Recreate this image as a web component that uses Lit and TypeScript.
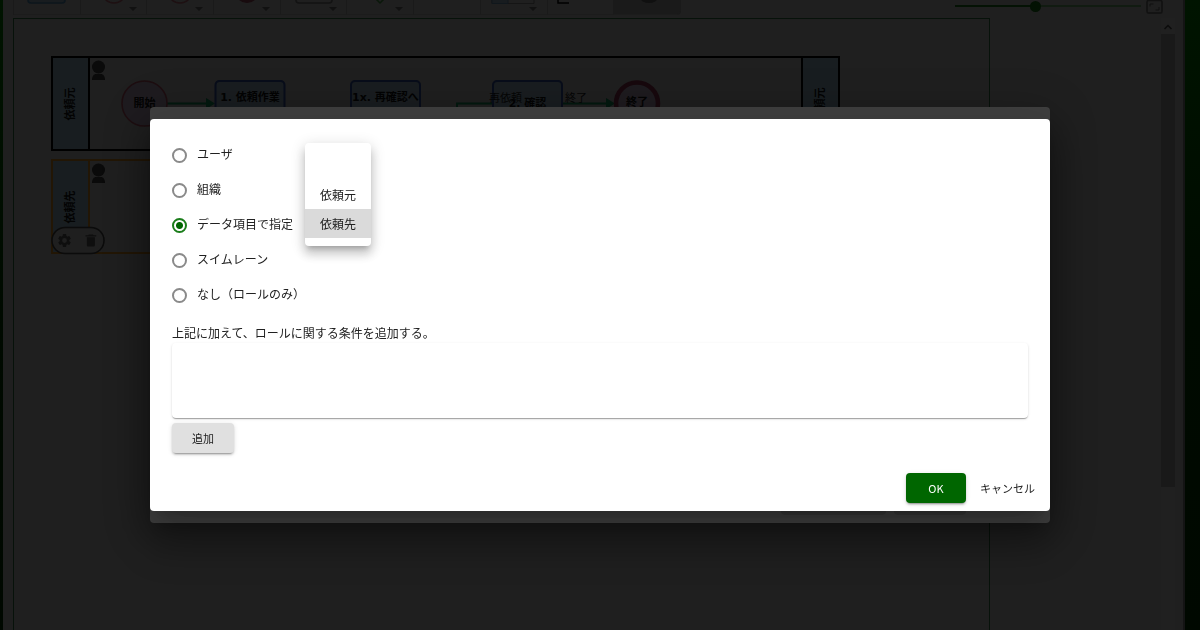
import { LitElement, html, svg, css } from "lit";
import { customElement, property, state } from "lit/decorators.js";
import { classMap } from "lit/directives/class-map.js";

@customElement("flow-toolbar")
export class FlowToolbar extends LitElement {
  static styles = css`
    :host {
      display: flex;
      justify-content: space-between;
      align-items: flex-end;
      height: 15px;
      overflow: hidden;
    }
    .tools {
      display: grid;
      grid-template-columns: repeat(10, 1fr);
      width: 667px;
      height: 15px;
      border-left: 1px solid #1a1a1a;
    }
    .tool {
      display: block;
      min-width: 0;
      padding: 0;
      border: 0;
      border-right: 1px solid #1a1a1a;
      border-bottom: 1px solid #1c1c1c;
      background: none;
    }
    .tool.active {
      background: #1a1a1a;
      border-bottom-right-radius: 4px;
    }
    .tool svg {
      display: block;
      width: 66px;
      height: 14px;
    }
    .view {
      display: flex;
      align-items: center;
      gap: 5px;
      height: 15px;
    }
    .zoom {
      appearance: none;
      width: 186px;
      height: 12px;
      margin: 0 0 3px;
      background: linear-gradient(#041204, #041204) left / 43% 2px no-repeat,
        linear-gradient(#111b11, #111b11) center / 100% 2px no-repeat;
    }
    .zoom::-webkit-slider-thumb {
      appearance: none;
      width: 11px;
      height: 11px;
      border-radius: 50%;
      background: #031203;
    }
    .full {
      width: 17px;
      height: 15px;
      padding: 0;
      border: 0;
      background: none;
    }
    .full svg {
      display: block;
    }
  `;

  private icons = [
    svg`<path d="M14 -4V0a3 3 0 0 0 3 3h31a3 3 0 0 0 3-3v-4" fill="#181c1f" stroke="#0c161d" stroke-width="1.500"/>`,
    svg`<circle cx="33" cy="-9" r="12" fill="none" stroke="#1e1012" stroke-width="1.500"/>`,
    svg`<circle cx="33" cy="-9" r="12" fill="none" stroke="#1e1012" stroke-width="1.500"/>`,
    svg`<circle cx="33" cy="-9" r="12" fill="#180b0e"/>`,
    svg`<path d="M15 -4V0a3 3 0 0 0 3 3h30a3 3 0 0 0 3-3v-4" fill="none" stroke="#131313" stroke-width="1.500"/>`,
    svg`<path d="M29 -1l4 4 4-4" fill="none" stroke="#0a180a" stroke-width="1.500"/>`,
    svg``,
    svg`<path d="M11 -4V3.500H53V-4" fill="none" stroke="#151515"/><path d="M11 -4V3.500H27V-4" fill="#181c1f" stroke="#10171c"/>`,
    svg`<path d="M10 -4V3H21" fill="none" stroke="#000" stroke-width="1.500"/>`,
    svg`<ellipse cx="35" cy="-1" rx="8" ry="4" fill="#101010"/>`,
  ];
  private names = ["作業", "開始", "中間", "終了", "データ", "分岐", "線", "レーン", "注釈", "選択"];
  private menus = [1, 2, 3, 4, 5, 7];

  render() {
    return html`
      <div class="tools">
        ${this.icons.map(
          (icon, i) => html`<button
            class=${classMap({ tool: true, active: i === 9 })}
            aria-label=${this.names[i]}
          >
            <svg viewBox="0 0 66 14" aria-hidden="true">
              ${icon}
              ${this.menus.includes(i) ? svg`<path d="M48 7h8l-4 4z" fill="#111"/>` : ""}
            </svg>
          </button>`
        )}
      </div>
      <div class="view">
        <input class="zoom" type="range" min="0" max="100" value="43" aria-label="ズーム" />
        <button class="full" aria-label="全画面">
          <svg width="17" height="15" viewBox="0 0 17 15" fill="none" stroke="#111">
            <rect x="1" y="0.500" width="15" height="12.500" rx="1.500" stroke-width="1.500" />
            <path d="M4 6.500V4H7.500M13 7v3H9.500" />
          </svg>
        </button>
      </div>
    `;
  }
}

@customElement("flow-diagram")
export class FlowDiagram extends LitElement {
  static styles = css`
    :host {
      display: block;
    }
    svg {
      display: block;
      font-family: "DejaVu Sans", "Noto Sans CJK JP", sans-serif;
      font-size: 11px;
    }
    .name {
      font-weight: 700;
      text-anchor: middle;
      fill: #030303;
    }
    .note {
      fill: #050505;
    }
    .flow {
      fill: none;
      stroke: #03180f;
      stroke-width: 2;
    }
    .head {
      fill: #03180f;
    }
    .task {
      fill: #191d20;
      stroke: #080d1a;
      stroke-width: 2;
    }
  `;

  private lane(y: number, label: string, color: string) {
    return svg`
      <rect x="52" y=${y} width="787" height="93" fill="none" stroke=${color} stroke-width="2"/>
      <rect x="52" y=${y} width="37" height="93" fill="#181d20" stroke=${color} stroke-width="2"/>
      <text class="name" transform=${`translate(74 ${y + 47}) rotate(-90)`}>${label}</text>
      <circle cx="98.500" cy=${y + 10} r="6.500" fill="#0a0a0a"/>
      <path d=${`M92 ${y + 23}c0-4 2-6 4-6h5c2 0 4 2 4 6z`} fill="#0a0a0a"/>`;
  }

  private task(x: number, label: string, y: number) {
    return svg`
      <rect class="task" x=${x} y="81" width="69" height="46" rx="4"/>
      <text class="name" x=${x + 34.5} y=${y}>${label}</text>`;
  }

  render() {
    return html`
      <svg width="975" height="640" viewBox="14 19 975 640" role="img" aria-label="ワークフロー図">
        ${this.lane(57, "依頼元", "#000")}
        <rect x="802" y="57" width="37" height="93" fill="#181d20" stroke="#000" stroke-width="2" />
        <text class="name" transform="translate(824 104) rotate(-90)">依頼元</text>
        ${this.lane(160, "依頼先", "#221605")}
        <path class="flow" d="M167 103.500H208M457 125V103.500H492M562 103.500H607" />
        <path class="head" d="M206 98l9 5.500-9 5.500zM606 98l9 5.500-9 5.500z" />
        <circle cx="144.500" cy="103.500" r="22.500" fill="#1e1b1f" stroke="#1d0d10" stroke-width="1.500" />
        <text class="name" x="144.500" y="107">開始</text>
        ${this.task(215.5, "1. 依頼作業", 101)} ${this.task(351, "1x. 再確認へ", 101)}
        ${this.task(493, "2. 確認", 107)}
        <text class="note" x="489" y="102">再依頼</text>
        <text class="note" x="565" y="102">終了</text>
        <circle cx="637" cy="103.500" r="21" fill="#1e1b1f" stroke="#17080d" stroke-width="4.500" />
        <text class="name" x="637" y="106">終了</text>
        <rect x="52" y="227.500" width="52" height="26" rx="13" fill="#1f1f1f" stroke="#0b0b0b" stroke-width="1.500" />
        <g fill="#0e0e0e" transform="translate(56.500 232.500) scale(.667)">
          <path
            d="M19.140 12.940c.040-.3.060-.61.060-.94s-.020-.640-.070-.940l2.030-1.580a.49.49 0 0 0 .12-.61l-1.920-3.320a.488.488 0 0 0-.59-.22l-2.390.96c-.5-.38-1.030-.7-1.620-.94l-.36-2.540A.484.484 0 0 0 13.920 2.400h-3.840c-.24 0-.43.17-.47.41l-.36 2.540c-.59.24-1.130.57-1.620.94l-2.390-.96c-.22-.08-.47 0-.59.22L2.740 8.870c-.12.21-.08.47.12.61l2.030 1.580c-.05.3-.09.63-.09.94s.02.64.07.94l-2.030 1.580a.49.49 0 0 0-.12.61l1.920 3.320c.12.22.37.29.59.22l2.390-.96c.5.38 1.030.7 1.620.94l.36 2.540c.05.24.24.41.48.41h3.840c.24 0 .44-.17.47-.41l.36-2.540c.59-.24 1.130-.56 1.620-.94l2.390.96c.22.08.47 0 .59-.22l1.920-3.320c.12-.22.07-.47-.12-.61zM12 15.600A3.600 3.600 0 1 1 12 8.400a3.600 3.600 0 0 1 0 7.200z"
          />
          <path transform="translate(39.500 0)" d="M6 19c0 1.100.9 2 2 2h8c1.100 0 2-.9 2-2V7H6zM20 4h-4l-1-1H9L8 4H4v2h16z" />
        </g>
      </svg>
    `;
  }
}

@customElement("assignee-dialog")
export class AssigneeDialog extends LitElement {
  static styles = css`
    :host {
      display: block;
      box-sizing: border-box;
      padding: 18px 22px 8px;
      border-radius: 4px;
      background: #fff;
      color: #212121;
      font: 12px/18px "Noto Sans CJK JP", sans-serif;
      box-shadow: 0 11px 15px -7px rgba(0, 0, 0, 0.2), 0 24px 38px 3px rgba(0, 0, 0, 0.14),
        0 9px 46px 8px rgba(0, 0, 0, 0.12);
    }
    .kinds {
      margin: 0 0 12px;
      padding: 0;
      border: 0;
    }
    .kind {
      display: flex;
      align-items: center;
      gap: 12px;
      height: 35px;
    }
    .kind label {
      display: flex;
      align-items: center;
      gap: 10px;
      padding-bottom: 1px;
    }
    .kind input {
      appearance: none;
      box-sizing: border-box;
      width: 15px;
      height: 15px;
      margin: 3px 0 0;
      border: 2px solid #8a8a8a;
      border-radius: 50%;
    }
    .kind input:checked {
      border-color: #1b7d1b;
      background: radial-gradient(circle, #060 3px, transparent 4px);
    }
    .anchor {
      position: relative;
      align-self: stretch;
    }
    .menu {
      position: absolute;
      left: 0;
      top: -64px;
      z-index: 1;
      padding: 8px 0;
      border-radius: 4px;
      background: #fff;
      box-shadow: 0 5px 5px -3px rgba(0, 0, 0, 0.2), 0 8px 10px 1px rgba(0, 0, 0, 0.14),
        0 3px 14px 2px rgba(0, 0, 0, 0.12);
    }
    .option {
      display: block;
      width: 66px;
      height: 29px;
      padding: 0;
      border: 0;
      background: none;
      color: inherit;
      font: inherit;
    }
    .option.selected {
      background: #dadada;
    }
    .hint {
      margin: 0 0 1px;
    }
    .roles {
      height: 75px;
      margin-bottom: 5px;
      border-radius: 4px;
      box-shadow: 0 2px 1px -1px rgba(0, 0, 0, 0.2), 0 1px 1px rgba(0, 0, 0, 0.14),
        0 1px 3px rgba(0, 0, 0, 0.12);
    }
    .button {
      min-width: 60px;
      height: 30px;
      padding: 0 20px;
      border: 0;
      border-radius: 4px;
      background: #e0e0e0;
      color: inherit;
      font: 11px/18px "Noto Sans CJK JP", sans-serif;
      box-shadow: 0 3px 1px -2px rgba(0, 0, 0, 0.2), 0 2px 2px rgba(0, 0, 0, 0.14),
        0 1px 5px rgba(0, 0, 0, 0.12);
    }
    .button.primary {
      background: #060;
      color: #fff;
    }
    .button.text {
      min-width: 0;
      padding: 0;
      background: none;
      box-shadow: none;
    }
    .add {
      display: flex;
    }
    .actions {
      display: flex;
      justify-content: flex-end;
      gap: 14px;
      margin: 20px -7px 0 0;
    }
  `;

  @property() target = "依頼先";
  @state() private kind = 2;
  private kinds = ["ユーザ", "組織", "データ項目で指定", "スイムレーン", "なし（ロールのみ）"];

  render() {
    return html`
      <fieldset class="kinds">
        ${this.kinds.map(
          (name, i) => html`<div class="kind">
            <label>
              <input type="radio" name="kind" .checked=${this.kind === i} @change=${() => (this.kind = i)} />
              <span>${name}</span>
            </label>
            ${i === 2 ? html`<div class="anchor">${this.menu()}</div>` : ""}
          </div>`
        )}
      </fieldset>
      <p class="hint" id="hint">上記に加えて、ロールに関する条件を追加する。</p>
      <div class="roles" role="list" aria-labelledby="hint"></div>
      <div class="add"><button class="button">追加</button></div>
      <div class="actions">
        <button class="button primary">OK</button>
        <button class="button text">キャンセル</button>
      </div>
    `;
  }

  private menu() {
    return html`<div class="menu" role="listbox" aria-label="データ項目">
      ${["", "依頼元", "依頼先"].map(
        (item) => html`<button
          class=${classMap({ option: true, selected: item === this.target })}
          role="option"
          aria-selected=${item === this.target}
          @click=${() => (this.target = item)}
        >${item}</button>`
      )}
    </div>`;
  }
}

@customElement("app-root")
export class AppRoot extends LitElement {
  static styles = css`
    :host {
      display: flex;
      box-sizing: border-box;
      height: 100vh;
      overflow: hidden;
      padding: 0 15px 0 3px;
      background: linear-gradient(#001400, #000a00 50%, #000800);
    }
    .editor {
      box-sizing: border-box;
      flex: 1;
      min-width: 0;
      display: flex;
      flex-direction: column;
      gap: 3px;
      padding: 0 8px 0 10px;
      border-right: 2px solid #141414;
      background: #1f1f1f;
    }
    .bar {
      margin-right: 12px;
    }
    .work {
      flex: 1;
      min-height: 0;
      display: flex;
      justify-content: space-between;
    }
    .sheet {
      flex: none;
      overflow: hidden;
      border: 1px solid #07120a;
      border-bottom: 0;
    }
    .scroll {
      display: flex;
      flex-direction: column;
      width: 14px;
      background: #202020;
    }
    .scroll svg {
      display: block;
      flex: none;
    }
    .thumb {
      height: 74%;
      background: #191919;
    }
    .overlay {
      position: fixed;
      inset: 0;
      display: grid;
      place-items: center;
    }
    .back,
    .front {
      grid-area: 1 / 1;
      width: 75%;
    }
    .back {
      box-sizing: border-box;
      min-height: 416px;
      display: flex;
      align-items: flex-end;
      justify-content: flex-end;
      gap: 8px;
      padding: 0 84px 8px;
      border-radius: 4px;
      background: #404040;
      box-shadow: 0 11px 15px -7px rgba(0, 0, 0, 0.2), 0 24px 38px 3px rgba(0, 0, 0, 0.14),
        0 9px 46px 8px rgba(0, 0, 0, 0.12);
    }
    .stub {
      width: 72px;
      height: 30px;
      border-radius: 4px;
      background: #383838;
    }
    .stub.wide {
      width: 105px;
    }
  `;

  render() {
    return html`
      <main class="editor">
        <flow-toolbar class="bar"></flow-toolbar>
        <div class="work">
          <div class="sheet"><flow-diagram></flow-diagram></div>
          <div class="scroll">
            <svg width="14" height="16" viewBox="0 0 14 16" fill="none" stroke="#0c0c0c" stroke-width="1.500">
              <path d="M3.500 11L7 7.500 10.500 11" />
            </svg>
            <div class="thumb"></div>
          </div>
        </div>
      </main>
      <div class="overlay">
        <div class="back">
          <div class="stub wide"></div>
          <div class="stub"></div>
        </div>
        <assignee-dialog class="front" role="dialog" aria-modal="true"></assignee-dialog>
      </div>
    `;
  }
}
